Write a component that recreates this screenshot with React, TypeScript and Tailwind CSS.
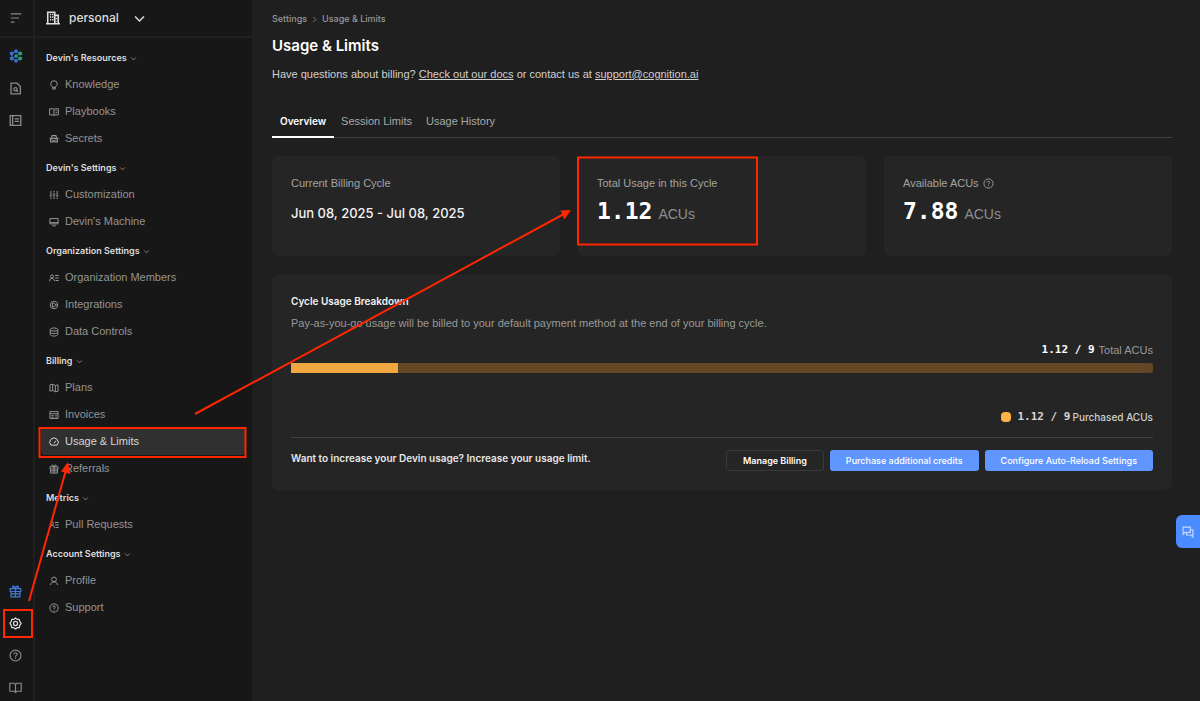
import type { ReactNode } from 'react';

interface NavItem {
  label: string;
  icon: ReactNode;
  active?: boolean;
}

interface NavGroup {
  heading: string;
  items: NavItem[];
}

function Icon({ children, size = 10, width = 1.6 }: { children: ReactNode; size?: number; width?: number }) {
  return (
    <svg
      width={size}
      height={size}
      viewBox="0 0 16 16"
      fill="none"
      stroke="currentColor"
      strokeWidth={width}
      className="shrink-0"
      aria-hidden="true"
    >
      {children}
    </svg>
  );
}

const gearPath =
  'M8 1.2 9.9 2.9 12.6 2.9 13.1 5.5 15 7.9 13.2 10.3 12.7 13 10 13.2 8 14.9 5.9 13.2 3.3 13 2.8 10.3 1 7.9 2.9 5.5 3.4 2.9 6.1 2.9Z';

const giftShape = (
  <>
    <path d="M1.5 4.5h13v3.5h-13zM2.5 8v6.5h11V8M8 4.5v10M2.5 11h11" />
    <path d="M8 4.5C5.5 4.5 4.4 3.7 4.4 2.6 4.4 1 7.4.6 8 4.5 8.6.6 11.6 1 11.6 2.6 11.6 3.7 10.5 4.5 8 4.5Z" />
  </>
);

const questionShape = (
  <>
    <circle cx="8" cy="8" r="6.7" />
    <path d="M6 6.6C6 5.3 6.9 4.6 8 4.6s2 .7 2 1.8c0 1.3-2 1.5-2 3M8 10.6V12" />
  </>
);

const bookShape = <path d="M8 3.5v10M1 2.8h5.5L8 4.2l1.5-1.4H15v9.8H9.5L8 14l-1.5-1.4H1z" />;

const memberShape = (
  <>
    <circle cx="4.8" cy="5.5" r="2.4" />
    <path d="M1 13c0-2.8 1.5-4.4 3.8-4.4S8.6 10.2 8.6 13M9.5 4h6M10 8h5.5M10.5 12h5" />
  </>
);

const groups: NavGroup[] = [
  {
    heading: "Devin's Resources",
    items: [
      {
        label: 'Knowledge',
        icon: (
          <Icon>
            <path d="M6 11C3.8 10.2 2.8 8.4 2.8 6.4A5.2 5.2 0 0 1 13.2 6.4C13.2 8.4 12.2 10.2 10 11v3.5H6zM6 11.8h4" />
          </Icon>
        ),
      },
      { label: 'Playbooks', icon: <Icon>{bookShape}<path d="M10.5 6H13M10.5 9H13" /></Icon> },
      {
        label: 'Secrets',
        icon: (
          <Icon width={1.8}>
            <path d="M4 6 5 2.5h6L12 6M1 7h14" />
            <path d="M2.5 7v5.5h4l1-2h1l1 2h4V7M4 9.5h2M10 9.5h2" />
          </Icon>
        ),
      },
    ],
  },
  {
    heading: "Devin's Settings",
    items: [
      {
        label: 'Customization',
        icon: (
          <Icon>
            <path d="M3 1.5v8M3 12v2.5M8 1.5V4M8 6.5v8M13 1.5v8M13 12v2.5M1 9.5h4M6 6.5h4M11 9.5h4" />
          </Icon>
        ),
      },
      { label: "Devin's Machine", icon: <Icon><path d="M1.5 2.5h13V11h-13zM1.5 9h13M5 14h6" /></Icon> },
    ],
  },
  {
    heading: 'Organization Settings',
    items: [
      { label: 'Organization Members', icon: <Icon>{memberShape}</Icon> },
      {
        label: 'Integrations',
        icon: (
          <Icon>
            <circle cx="8" cy="8" r="6" />
            <path d="M5.5 5v6H8l3-3-3-3zM11 8h3" />
          </Icon>
        ),
      },
      {
        label: 'Data Controls',
        icon: (
          <Icon>
            <ellipse cx="8" cy="4" rx="6" ry="2.5" />
            <path d="M2 4v8c0 1.4 2.7 2.5 6 2.5s6-1.1 6-2.5V4M2 8c0 1.4 2.7 2.5 6 2.5S14 9.4 14 8" />
          </Icon>
        ),
      },
    ],
  },
  {
    heading: 'Billing',
    items: [
      { label: 'Plans', icon: <Icon><path d="M1.5 3 5.8 2l4.4 2 4.3-1v10l-4.3 1-4.4-2-4.3 1zM5.8 2v10M10.2 4v10" /></Icon> },
      {
        label: 'Invoices',
        icon: <Icon><path d="M1.5 2.5h13v11h-13zM1.5 6h13M4 9h3.5M4 11.5h3.5M10 9h2.5M10 11.5h2.5" /></Icon>,
      },
      {
        label: 'Usage & Limits',
        active: true,
        icon: (
          <Icon>
            <path d="M3 13A6.8 6.8 0 1 1 13 13zM8 10l3-4" />
          </Icon>
        ),
      },
      { label: 'Referrals', icon: <Icon>{giftShape}</Icon> },
    ],
  },
  {
    heading: 'Metrics',
    items: [{ label: 'Pull Requests', icon: <Icon>{memberShape}</Icon> }],
  },
  {
    heading: 'Account Settings',
    items: [
      {
        label: 'Profile',
        icon: (
          <Icon>
            <circle cx="8" cy="5.5" r="3.8" />
            <path d="M2.5 14.5c0-3.2 2-5 5.5-5s5.5 1.8 5.5 5" />
          </Icon>
        ),
      },
      { label: 'Support', icon: <Icon>{questionShape}</Icon> },
    ],
  },
];

function Chevron({ size = 8 }: { size?: number }) {
  return (
    <Icon size={size} width={1.8}>
      <path d="M2.5 5.5 8 11l5.5-5.5" />
    </Icon>
  );
}

function DevinLogo() {
  return (
    <svg width="14" height="14" viewBox="0 0 14 14" aria-hidden="true">
      <path d="M7 2.2 3 4.5v5l4 2.3M3 9.5 7 7M7 2.2l4 2.3" fill="none" stroke="#3b6fd0" />
      <path d="M7 7l4-2.5M7 7l4 2.5M7 11.8l4-2.3" fill="none" stroke="#23a07f" />
      <g fill="#3b6fd0">
        <circle cx="7" cy="2.2" r="1.9" />
        <circle cx="2.7" cy="4.5" r="1.9" />
        <circle cx="2.7" cy="9.5" r="1.9" />
        <circle cx="7" cy="11.8" r="1.9" />
      </g>
      <g fill="#23a07f">
        <circle cx="11.3" cy="4.5" r="1.9" />
        <circle cx="7" cy="7" r="1.7" />
        <circle cx="11.3" cy="9.5" r="1.9" />
      </g>
    </svg>
  );
}

function RailButton({ label, className = '', children }: { label: string; className?: string; children: ReactNode }) {
  return (
    <button type="button" aria-label={label} className={`flex h-[26px] w-[31px] items-center justify-center ${className}`}>
      {children}
    </button>
  );
}

function Rail() {
  return (
    <aside className="flex w-[35px] shrink-0 flex-col border-r-2 border-[#1f1f1f] text-[#8a8a8a]">
      <div className="flex h-[38px] items-center border-b-2 border-[#202020] pb-px">
        <RailButton label="Toggle menu">
          <Icon size={12} width={1.6}>
            <path d="M1 2.5h14M1 8h11M1 13.5h5" />
          </Icon>
        </RailButton>
      </div>
      <div className="mt-[5px] flex flex-col gap-[6px]">
        <RailButton label="Home">
          <DevinLogo />
        </RailButton>
        <RailButton label="Search documents">
          <Icon size={13} width={1.6}>
            <path d="M2.5 1.5H10l4 4v9H2.5z" />
            <circle cx="8" cy="9" r="2" />
            <path d="M9.5 10.5 11 12" />
          </Icon>
        </RailButton>
        <RailButton label="Library">
          <Icon size={13} width={1.6}>
            <path d="M1.5 2h13v12h-13zM4.5 2v12M7 6h5.5M7 9h5.5" />
          </Icon>
        </RailButton>
      </div>
      <div className="mt-auto flex flex-col gap-[6px] pb-px">
        <RailButton label="Gifts" className="text-[#4378d8]">
          <Icon size={13} width={1.5}>{giftShape}</Icon>
        </RailButton>
        <RailButton label="Settings" className="text-[#dcdcdc]">
          <Icon size={13} width={1.5}>
            <path d={gearPath} strokeLinejoin="round" />
            <circle cx="8" cy="8" r="2.5" />
          </Icon>
        </RailButton>
        <RailButton label="Help">
          <Icon size={13} width={1.4}>{questionShape}</Icon>
        </RailButton>
        <RailButton label="Docs">
          <Icon size={13} width={1.4}>{bookShape}</Icon>
        </RailButton>
      </div>
    </aside>
  );
}

function Sidebar() {
  return (
    <aside className="w-[219px] shrink-0 border-r-2 border-[#1f1f1f]">
      <button
        type="button"
        className="flex h-[38px] w-full items-center border-b-2 border-[#202020] pl-[11px] font-['Inter',sans-serif] text-[12px] font-medium text-[#dedede]"
      >
        <Icon size={14} width={1.8}>
          <path d="M0 14.5h16M2 14.5v-13h8v13M10 5h4v9.5M4.5 4H6M7 4h1.5M4.5 7H6M7 7h1.5M4.5 10H6M7 10h1.5M12 8v1M12 11v1" />
        </Icon>
        <span className="ml-[9px]">personal</span>
        <span className="ml-[14px]">
          <Chevron size={13} />
        </span>
      </button>
      <nav className="pt-[7px]">
        {groups.map((group) => (
          <div key={group.heading} className="mb-[3px]">
            <button
              type="button"
              className="flex h-[26px] items-center gap-[3px] pl-[11px] font-['Inter',sans-serif] text-[9px] font-semibold text-[#dedede]"
            >
              {group.heading}
              <span className="text-[#9a9a9a]">
                <Chevron size={7} />
              </span>
            </button>
            {group.items.map((item) => (
              <a
                key={item.label}
                href="#"
                className={`mx-[6px] flex h-[27px] items-center gap-[6px] rounded-sm pl-2 text-[11px] ${
                  item.active ? 'bg-[#303030] text-[#d6d6d6]' : 'text-[#949494]'
                }`}
              >
                {item.icon}
                {item.label}
              </a>
            ))}
          </div>
        ))}
      </nav>
    </aside>
  );
}

function StatCard({ label, children }: { label: ReactNode; children: ReactNode }) {
  return (
    <div className="h-[100px] rounded-md bg-[#252525] px-[19px] pt-[19px]">
      <div className="flex items-center gap-1 text-[11px] leading-4 text-[#a3a3a3]">{label}</div>
      {children}
    </div>
  );
}

function AcuValue({ value }: { value: string }) {
  return (
    <div className="mt-[6px] flex items-baseline gap-[6px] leading-7">
      <span className="font-['DejaVu_Sans_Mono',monospace] text-[23px] font-bold text-white">{value}</span>
      <span className="text-[14px] text-[#8f8f8f]">ACUs</span>
    </div>
  );
}

function Ratio({ used, total, className }: { used: number; total: number; className: string }) {
  return (
    <span className={`font-['DejaVu_Sans_Mono',monospace] text-[11px] font-bold whitespace-pre ${className}`}>
      {`${used} / ${total}`}
    </span>
  );
}

function Breakdown() {
  const used = 1.12;
  const total = 9;

  return (
    <section className="mt-[19px] rounded-md bg-[#252525] px-[19px] pt-[18px] pb-[19px] text-[11px] leading-4">
      <h2 className="font-['Inter',sans-serif] text-[10px] font-semibold text-[#f2f2f2]">Cycle Usage Breakdown</h2>
      <p className="mt-[6px] text-[#999999]">
        Pay-as-you-go usage will be billed to your default payment method at the end of your billing cycle.
      </p>
      <div className="mt-[11px] flex items-center justify-end gap-1 text-[#999999]">
        <Ratio used={used} total={total} className="text-white" />
        <span>Total ACUs</span>
      </div>
      <div className="mt-[5px] h-[10px] overflow-hidden rounded-r-[3px] bg-[#614726]">
        <div className="h-full bg-[#f0a742]" style={{ width: `${(used / total) * 100}%` }} />
      </div>
      <div className="mt-9 flex items-center justify-end text-[#d0d0d0]">
        <span className="mr-[6px] h-[10px] w-[10px] rounded-[4px] bg-[#ffb347]" />
        <Ratio used={used} total={total} className="text-[#d6d6d6]" />
        <span className="ml-[2px] font-['Inter',sans-serif] text-[10px] font-medium">Purchased ACUs</span>
      </div>
      <div className="mt-3 flex items-start gap-[6px] border-t border-[#404040] pt-3 font-['Inter',sans-serif] text-[9px] font-medium text-white">
        <p className="mr-auto text-[10px] font-semibold text-[#e8e8e8]">
          Want to increase your Devin usage? Increase your usage limit.
        </p>
        <button type="button" className="h-[21px] rounded-[3px] border border-[#3a3a3a] px-4 font-semibold">
          Manage Billing
        </button>
        <button type="button" className="h-[21px] rounded-[3px] bg-[#6096ff] px-4">
          Purchase additional credits
        </button>
        <button type="button" className="h-[21px] rounded-[3px] bg-[#6096ff] px-4">
          Configure Auto-Reload Settings
        </button>
      </div>
    </section>
  );
}

const tabs = ['Overview', 'Session Limits', 'Usage History'];

function Content() {
  return (
    <main className="min-w-0 flex-1 bg-[#1f1f1f] pt-[11px] pr-7 pl-[18px]">
      <div className="flex items-center gap-1 font-['Inter',sans-serif] text-[9px] leading-4 font-medium text-[#999999]">
        <a href="#">Settings</a>
        <span className="-rotate-90">
          <Chevron size={7} />
        </span>
        <a href="#">Usage &amp; Limits</a>
      </div>
      <h1 className="mt-[9px] font-['Inter',sans-serif] text-[15px] leading-5 font-semibold text-white">
        Usage &amp; Limits
      </h1>
      <p className="mt-[10px] text-[11px] leading-4 text-[#d0d0d0]">
        Have questions about billing?{' '}
        <a href="#" className="underline">
          Check out our docs
        </a>{' '}
        or contact us at{' '}
        <a href="#" className="underline">
          support@cognition.ai
        </a>
      </p>
      <div className="mt-6 flex h-8 border-b border-[#404040]" role="tablist">
        {tabs.map((tab, i) => (
          <button
            key={tab}
            type="button"
            role="tab"
            aria-selected={i === 0}
            className={`-mb-px h-8 border-b-2 pt-px ${
              i === 0
                ? "border-white px-2 font-['Inter',sans-serif] text-[10px] font-semibold text-white"
                : 'border-transparent px-[7px] text-[11px] text-[#a8a8a8]'
            }`}
          >
            {tab}
          </button>
        ))}
      </div>
      <div className="mt-[18px] grid grid-cols-3 gap-[18px]">
        <StatCard label="Current Billing Cycle">
          <p className="mt-3 font-['Inter',sans-serif] text-[13px] leading-5 font-medium text-[#f2f2f2]">
            Jun 08, 2025 - Jul 08, 2025
          </p>
        </StatCard>
        <StatCard label="Total Usage in this Cycle">
          <AcuValue value="1.12" />
        </StatCard>
        <StatCard
          label={
            <>
              Available ACUs
              <Icon size={11} width={1.3}>{questionShape}</Icon>
            </>
          }
        >
          <AcuValue value="7.88" />
        </StatCard>
      </div>
      <Breakdown />
    </main>
  );
}

function Annotations() {
  return (
    <svg className="pointer-events-none absolute top-0 left-0" width="1200" height="701" fill="none" aria-hidden="true">
      <g stroke="#ff2600" strokeWidth="2">
        <rect x="4" y="610" width="28" height="27" />
        <rect x="39.5" y="428" width="206" height="29" />
        <rect x="578" y="157.5" width="179" height="87" />
        <path d="M29 601 66 470M195 414 563 214.5" />
      </g>
      <path d="M68 462 70.5 474 61 471.5ZM571 210 564.5 219.5 560.5 210.5Z" fill="#ff2600" />
    </svg>
  );
}

export default function App() {
  return (
    <div className="relative flex min-h-screen overflow-hidden bg-[#171717] font-['Liberation_Sans',Arial,sans-serif]">
      <Rail />
      <Sidebar />
      <Content />
      <button
        type="button"
        aria-label="Open chat"
        className="absolute top-[515px] right-0 flex h-[33px] w-6 items-center justify-center rounded-l-md bg-[#4a8cff] text-[#c3d8ff]"
      >
        <Icon size={12} width={1.6}>
          <path d="M1.5 1.5H11v7H4L1.5 11zM11 5h3.5v9.5L12 12H6V9" />
        </Icon>
      </button>
      <Annotations />
    </div>
  );
}
